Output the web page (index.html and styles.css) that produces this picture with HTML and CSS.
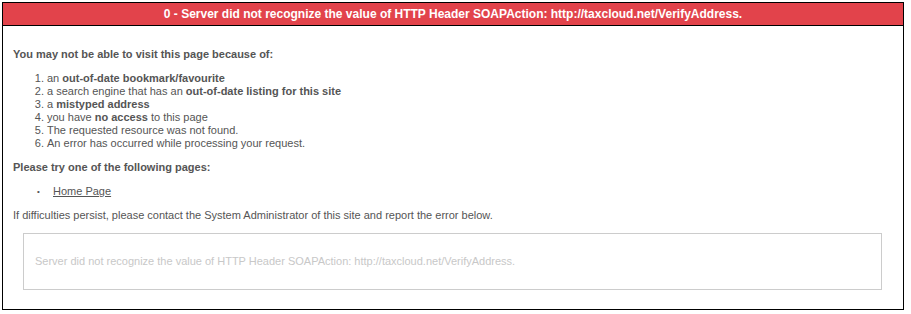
FILE: index.html
```html
<!DOCTYPE html>
<html lang="en">
<head>
  <meta charset="UTF-8" />
  <title>Error</title>
  <link rel="stylesheet" href="styles.css">
</head>
<body>
  <div id="error-box">
    <div class="error-title">0 - Server did not recognize the value of HTTP Header SOAPAction: http://taxcloud.net/VerifyAddress.</div>
    <div class="error-body">
      <p class="lead">You may not be able to visit this page because of:</p>
      <ol class="reasons">
        <li>an <strong>out-of-date bookmark/favourite</strong></li>
        <li>a search engine that has an <strong>out-of-date listing for this site</strong></li>
        <li>a <strong>mistyped address</strong></li>
        <li>you have <strong>no access</strong> to this page</li>
        <li>The requested resource was not found.</li>
        <li>An error has occurred while processing your request.</li>
      </ol>
      <p class="lead">Please try one of the following pages:</p>
      <ul class="pages">
        <li><a href="#">Home Page</a></li>
      </ul>
      <p>If difficulties persist, please contact the System Administrator of this site and report the error below.</p>
      <div class="error-detail">Server did not recognize the value of HTTP Header SOAPAction: http://taxcloud.net/VerifyAddress.</div>
    </div>
  </div>
</body>
</html>
```
FILE: styles.css
```css
body {
  margin: 0;
  background: #fff;
  font-family: "Liberation Sans", Arial, sans-serif;
  font-size: 11px;
  line-height: 13px;
  color: #555;
}
#error-box {
  margin: 2px;
  width: 900px;
  height: 306px;
  border: 1px solid #000;
}
.error-title {
  background: #e2434b;
  color: #fff;
  font-weight: bold;
  font-size: 12px;
  line-height: 22px;
  text-align: center;
  border-bottom: 1px solid #000;
}
.error-body {
  padding: 22px 10px 0 10px;
}
.error-body p {
  margin: 0 0 11px 0;
}
.lead {
  font-weight: bold;
}
.reasons {
  margin: 0 0 11px 0;
  padding-left: 34px;
}
.pages {
  margin: 0 0 11px 0;
  padding-left: 24px;
  list-style: none;
}
.pages li::before {
  content: "\2022";
  display: inline-block;
  width: 16px;
  font-size: 8px;
  vertical-align: 1px;
}
.pages a {
  color: #555;
}
.error-detail {
  margin: 10px 11px 0 10px;
  border: 1px solid #ccc;
  padding: 21px 11px;
  color: #c8c8c8;
}
```
